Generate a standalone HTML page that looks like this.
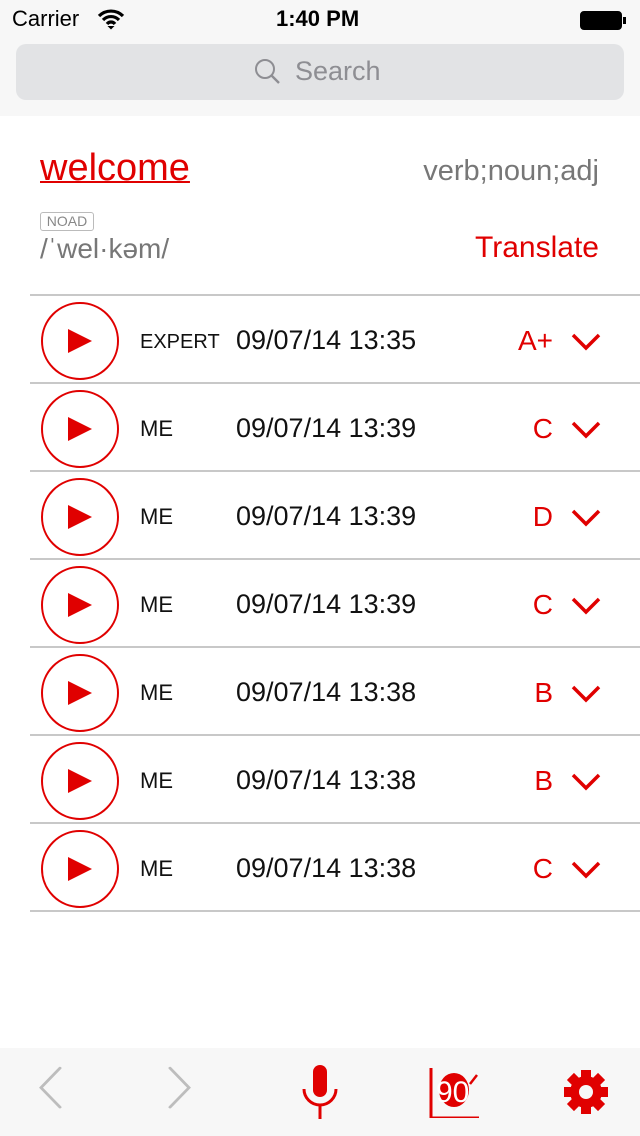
<!DOCTYPE html>
<html><head><meta charset="utf-8"><style>
*{margin:0;padding:0;box-sizing:border-box}
body{width:640px;height:1136px;position:relative;background:#fff;font-family:"Liberation Sans",Arial,sans-serif;overflow:hidden}
.a{position:absolute;white-space:nowrap}
.row{position:absolute;left:30px;width:610px;height:88px;border-bottom:2px solid #c8c8c8}
.circ{position:absolute;left:11px;top:6px;width:78px;height:78px;border:2px solid #e00000;border-radius:50%}
.tri{position:absolute;left:38px;top:33px;width:0;height:0;border-left:24px solid #e00000;border-top:12px solid transparent;border-bottom:12px solid transparent}
.who{position:absolute;left:110px;top:32px;font-size:22px;color:#111}
.dt{position:absolute;left:206px;top:29px;font-size:27px;color:#111}
.gr{position:absolute;right:87px;top:29px;font-size:28px;color:#e00000}
.chev{position:absolute;left:540px;top:36px}
</style></head><body>
<div class="a" style="left:0;top:0;width:640px;height:116px;background:#f7f7f7"></div>
<div class="a" style="left:12px;top:6px;font-size:22px;color:#000">Carrier</div>
<svg class="a" style="left:97px;top:8px" width="28" height="22" viewBox="0 0 28 22"><path d="M2 8a17 17 0 0 1 24 0M6 12a11 11 0 0 1 16 0M10 16a5 5 0 0 1 8 0" stroke="#000" stroke-width="3.2" fill="none"/><path d="M10.5 18l3.5 3.5 3.5-3.5z" fill="#000"/></svg>
<div class="a" style="left:276px;top:6px;font-size:22px;font-weight:bold;color:#000">1:40 PM</div>
<div class="a" style="left:580px;top:11px;width:42px;height:19px;border:2px solid #000;border-radius:4px;background:#000"></div>
<div class="a" style="left:623px;top:17px;width:3px;height:7px;background:#000"></div>
<div class="a" style="left:16px;top:44px;width:608px;height:56px;background:#e2e3e5;border-radius:10px"></div>
<svg class="a" style="left:254px;top:58px" width="28" height="28" viewBox="0 0 28 28"><circle cx="11" cy="11" r="9" stroke="#8e8e93" stroke-width="2" fill="none"/><path d="M17.5 17.5L25 25" stroke="#8e8e93" stroke-width="2.4"/></svg>
<div class="a" style="left:295px;top:56px;font-size:27px;color:#8e8e93">Search</div>

<div class="a" style="left:40px;top:147px;font-size:38px;color:#e00000;text-decoration:underline;text-decoration-thickness:2px">welcome</div>
<div class="a" style="right:41px;top:155px;font-size:29px;color:#777">verb;noun;adj</div>
<div class="a" style="left:40px;top:212px;width:54px;height:19px;border:1.5px solid #bbb;border-radius:3px;font-size:14px;color:#888;text-align:center;line-height:16px">NOAD</div>
<div class="a" style="left:40px;top:233px;font-size:28px;color:#777">/ˈwel·kəm/</div>
<div class="a" style="right:41px;top:231px;font-size:30px;color:#e00000">Translate</div>
<div class="a" style="left:30px;top:294px;width:610px;height:2px;background:#c8c8c8"></div>

<div class="row" style="top:296px"><div class="circ"></div><div class="tri"></div><div class="who" style="font-size:20px;top:35px">EXPERT</div><div class="dt">09/07/14 13:35</div><div class="gr">A+</div><svg class="chev" width="32" height="20"><path d="M3 3l13 13 13-13" stroke="#e00000" stroke-width="3.5" fill="none"/></svg></div>
<div class="row" style="top:384px"><div class="circ"></div><div class="tri"></div><div class="who">ME</div><div class="dt">09/07/14 13:39</div><div class="gr">C</div><svg class="chev" width="32" height="20"><path d="M3 3l13 13 13-13" stroke="#e00000" stroke-width="3.5" fill="none"/></svg></div>
<div class="row" style="top:472px"><div class="circ"></div><div class="tri"></div><div class="who">ME</div><div class="dt">09/07/14 13:39</div><div class="gr">D</div><svg class="chev" width="32" height="20"><path d="M3 3l13 13 13-13" stroke="#e00000" stroke-width="3.5" fill="none"/></svg></div>
<div class="row" style="top:560px"><div class="circ"></div><div class="tri"></div><div class="who">ME</div><div class="dt">09/07/14 13:39</div><div class="gr">C</div><svg class="chev" width="32" height="20"><path d="M3 3l13 13 13-13" stroke="#e00000" stroke-width="3.5" fill="none"/></svg></div>
<div class="row" style="top:648px"><div class="circ"></div><div class="tri"></div><div class="who">ME</div><div class="dt">09/07/14 13:38</div><div class="gr">B</div><svg class="chev" width="32" height="20"><path d="M3 3l13 13 13-13" stroke="#e00000" stroke-width="3.5" fill="none"/></svg></div>
<div class="row" style="top:736px"><div class="circ"></div><div class="tri"></div><div class="who">ME</div><div class="dt">09/07/14 13:38</div><div class="gr">B</div><svg class="chev" width="32" height="20"><path d="M3 3l13 13 13-13" stroke="#e00000" stroke-width="3.5" fill="none"/></svg></div>
<div class="row" style="top:824px"><div class="circ"></div><div class="tri"></div><div class="who">ME</div><div class="dt">09/07/14 13:38</div><div class="gr">C</div><svg class="chev" width="32" height="20"><path d="M3 3l13 13 13-13" stroke="#e00000" stroke-width="3.5" fill="none"/></svg></div>

<div class="a" style="left:0;top:1048px;width:640px;height:88px;background:#f7f7f7"></div>
<svg class="a" style="left:30px;top:1066px" width="40" height="50"><path d="M30 6L11 29 30 52" transform="translate(0,-3) scale(1,0.85)" stroke="#bdbdbd" stroke-width="3" fill="none" stroke-linecap="round"/></svg>
<svg class="a" style="left:160px;top:1066px" width="40" height="50"><path d="M10 6L29 29 10 52" transform="translate(0,-3) scale(1,0.85)" stroke="#bdbdbd" stroke-width="3" fill="none" stroke-linecap="round"/></svg>
<svg class="a" style="left:300px;top:1062px" width="40" height="58"><rect x="13" y="3" width="14" height="32" rx="7" fill="#e00000"/><path d="M4 27a16 16 0 0 0 32 0" stroke="#e00000" stroke-width="3" fill="none"/><path d="M20 43v14" stroke="#e00000" stroke-width="3"/></svg>
<svg class="a" style="left:428px;top:1064px" width="56" height="54"><path d="M3 4v50h48" stroke="#e00000" stroke-width="3" fill="none"/><ellipse cx="26" cy="26" rx="15" ry="17" fill="#e00000"/><path d="M42 20l7-9" stroke="#e00000" stroke-width="2.5"/><text x="8" y="38" font-family="Liberation Sans" font-size="30" fill="#fff">90</text></svg>
<svg class="a" style="left:562px;top:1068px" width="48" height="48" viewBox="0 0 48 48"><g fill="#e00000"><rect x="19" y="2" width="10" height="44"/><rect x="2" y="19" width="44" height="10"/><rect x="19" y="2" width="10" height="44" transform="rotate(45 24 24)"/><rect x="19" y="2" width="10" height="44" transform="rotate(-45 24 24)"/><circle cx="24" cy="24" r="16"/></g><circle cx="24" cy="24" r="7" fill="#f7f7f7"/></svg>
</body></html>
